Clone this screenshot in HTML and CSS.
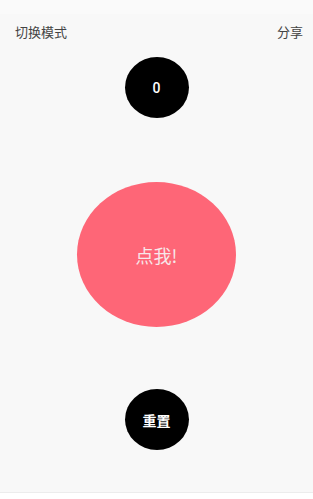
FILE: index.html
```html
<!DOCTYPE html>
<html lang="zh">
<head>
    <meta charset="UTF-8">
    <meta name="viewport" content="width=device-width, initial-scale=1.0">
    <title>点我</title>
    <link rel="stylesheet" href="styles.css">
</head>
<body>
    <div class="app">
        <div class="status-bar"></div>
        <div class="toolbar">
            <span class="tool-btn">切换模式</span>
            <span class="tool-btn">分享</span>
        </div>
        <div class="main">
            <div class="counter" id="counter">0</div>
            <div class="tap" onclick="tap()">点我!</div>
            <div class="reset" onclick="reset()">重置</div>
        </div>
        <div class="bottom"></div>
    </div>

    <script>
        let count = 0;

        function tap() {
            count++;
            document.getElementById('counter').textContent = count;
        }

        function reset() {
            count = 0;
            document.getElementById('counter').textContent = count;
        }
    </script>
</body>
</html>
```

FILE: styles.css
```css
body {
    margin: 0;
    font-family: "Noto Sans CJK SC", "Noto Sans", sans-serif;
    background-color: #f8f8f8;
}
.app {
    height: 499px;
    display: flex;
    flex-direction: column;
}
.status-bar {
    height: 14px;
    background-color: #fafafa;
}
.toolbar {
    display: flex;
    justify-content: space-between;
    align-items: center;
    height: 34px;
    padding: 0 10px 0 15px;
}
.tool-btn {
    font-size: 13px;
    color: #444;
}
.main {
    flex: 1;
    display: flex;
    flex-direction: column;
    align-items: center;
}
.counter, .reset {
    width: 64px;
    height: 61px;
    border-radius: 50%;
    background-color: #000;
    color: #fff;
    display: flex;
    align-items: center;
    justify-content: center;
}
.counter {
    margin-top: 9px;
    font-size: 14px;
    font-weight: 500;
    font-family: "Roboto", sans-serif;
}
.tap {
    margin-top: 64px;
    width: 159px;
    height: 145px;
    border-radius: 50%;
    background-color: #fe6677;
    color: #f7e8ea;
    font-size: 18px;
    display: flex;
    align-items: center;
    justify-content: center;
    cursor: pointer;
}
.reset {
    margin-top: 62px;
    font-size: 14px;
    font-weight: bold;
    cursor: pointer;
}
.bottom {
    height: 6px;
    background-color: #fff;
    border-top: 1px solid #ececec;
}
```
